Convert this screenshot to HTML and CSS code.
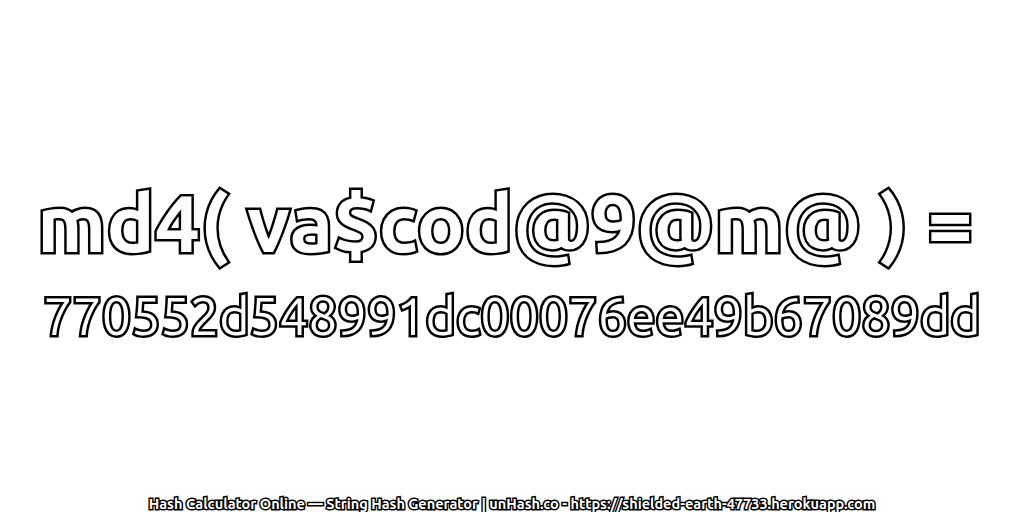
FILE: index.html
```
<!doctype html>
<html lang="en">
<head>
  <meta charset="utf-8" />
  <title>md4 hash</title>
  <link rel="stylesheet" href="styles.css">
</head>
<body>
  <main class="hash">
    <div class="line big">md4( va$cod@9@m@ ) =</div>
    <div class="line mid">770552d548991dc00076ee49b67089dd</div>
  </main>
  <footer class="foot">Hash Calculator Online — String Hash Generator | unHash.co - https://shielded-earth-47733.herokuapp.com</footer>
</body>
</html>
```
FILE: styles.css
```
*{box-sizing:border-box}
html,body{height:100%}
body{
  margin:0; background:#fff; color:#fff;
  font-family:Ubuntu,"Noto Sans","DejaVu Sans",sans-serif;
  display:flex; flex-direction:column; align-items:center;
}
.hash{flex:1; display:flex; flex-direction:column; align-items:center; padding-top:175px}

/* stroke painted under the white fill leaves a thin ring */
.line{white-space:nowrap; -webkit-text-stroke:5px #000; paint-order:stroke fill}
.big{font-size:80.5px; line-height:94px; margin-right:14px; font-weight:700}
.mid{font-size:52px; line-height:62px; margin-top:16px}

.foot{font-size:14.5px; line-height:16px; white-space:nowrap; font-weight:700; -webkit-text-stroke:3px #000; paint-order:stroke fill}
```
